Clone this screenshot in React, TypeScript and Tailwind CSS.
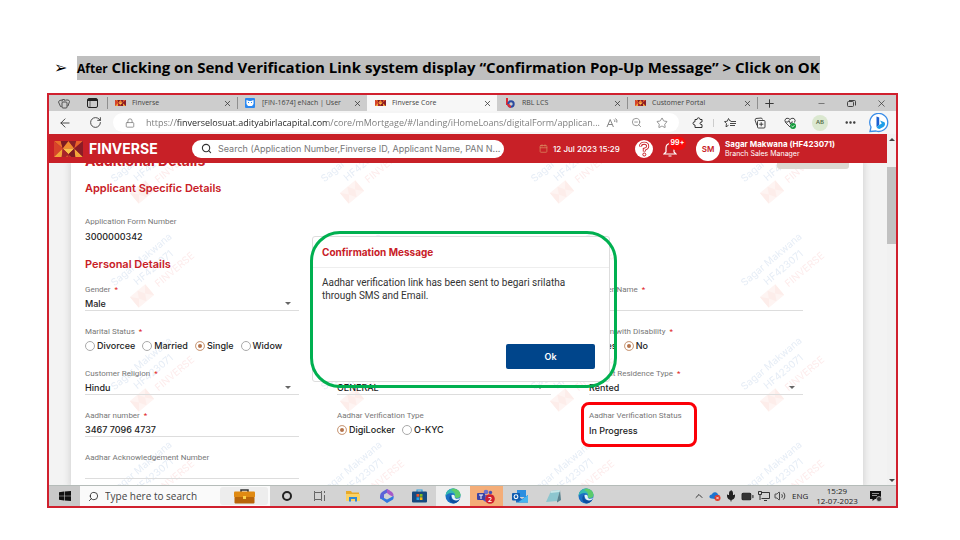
import { useId, type ReactNode } from "react";
import {
  ArrowLeft,
  BatteryMedium,
  Calendar,
  ChevronUp,
  Ellipsis,
  Lock,
  Mic,
  Minus,
  Plus,
  RotateCw,
  Search,
  Star,
  Volume2,
  X,
  ZoomOut,
} from "lucide-react";

const uiFont = "font-['Open_Sans','Noto_Sans',sans-serif]";
const formFont = "font-['Inter','Roboto',sans-serif]";

function SunLogo({ className }: { className: string }) {
  return (
    <svg viewBox="0 0 30 17" preserveAspectRatio="none" className={className} aria-hidden="true">
      <rect width="30" height="17" fill="#a8242a" />
      <path d="M0 0H7L9 8Z" fill="#e8702a" />
      <path d="M7 0H15L9 8Z" fill="#7d1a22" />
      <path d="M15 0L21 8L9 8Z" fill="#f08c2e" />
      <path d="M15 0H23L21 8Z" fill="#8c1f26" />
      <path d="M30 0H23L21 8Z" fill="#e8622a" />
      <path d="M0 0L9 8L0 17Z" fill="#d8432a" />
      <path d="M0 17L9 8L8 17Z" fill="#f2a53a" />
      <path d="M8 17L9 8L15 17Z" fill="#d9552b" />
      <path d="M9 8H21L15 14Z" fill="#fbc24a" />
      <path d="M15 17L21 8L22 17Z" fill="#c9352b" />
      <path d="M22 17L21 8L30 17Z" fill="#f2a53a" />
      <path d="M30 0L21 8L30 17Z" fill="#8a1c26" />
      <path d="M9 8L15 14L12 17L8 17Z" fill="#a8242a" />
      <path d="M21 8L15 14L18 17L22 17Z" fill="#7d1a22" />
    </svg>
  );
}

function Tab({ title, icon, active, fade }: { title: string; icon: ReactNode; active?: boolean; fade?: boolean }) {
  return (
    <div
      className={
        active
          ? "flex w-[130px] items-center bg-[#f7f7f7] pl-[7px]"
          : "flex w-[130px] items-center pl-[7px]"
      }
    >
      <span className="flex w-3 shrink-0 justify-center">{icon}</span>
      <span className={fade ? "ml-1.5 w-[84px] overflow-hidden whitespace-nowrap" : "ml-1.5 w-[84px] whitespace-nowrap"}>
        {title}
      </span>
      <button type="button" aria-label={"Close " + title} className="ml-[7px] text-[#333]">
        <X size={9} strokeWidth={2} />
      </button>
    </div>
  );
}

function Divider() {
  return <span className="-mr-px h-3 w-px self-center bg-[#8f8f8f]" />;
}

function TabStrip() {
  const sun = <SunLogo className="h-1.5 w-[11px]" />;
  return (
    <div className="flex h-4 items-stretch bg-[#cdcdcd] text-[7px] text-[#444]">
      <div className="flex w-[58px] items-center">
        <button type="button" aria-label="Workspaces" className="flex w-[30px] justify-center">
          <svg width="12" height="11" viewBox="0 0 12 11" fill="none" stroke="#444" strokeWidth="0.900">
            <rect x="4" y="4" width="5" height="6" rx="1" />
            <path d="M3.500 8.500H2.500L0.500 4L1.500 2.500L4 2M4 3.500L4.500 1.500H6.500L7 3M7.500 2H10.500L11.500 3.500L10 8H9.500" />
          </svg>
        </button>
        <button type="button" aria-label="Tab actions" className="flex w-[26px] justify-center">
          <svg width="11" height="10" viewBox="0 0 11 10" fill="none" stroke="#222">
            <rect x="0.500" y="0.500" width="10" height="9" rx="1.500" />
            <path d="M1 2H10" strokeWidth="2" />
            <path d="M3 3V9" strokeWidth="0.600" />
          </svg>
        </button>
      </div>
      <Divider />
      <Tab title="Finverse" icon={sun} />
      <Divider />
      <Tab
        title="[FIN-1674] eNach | User"
        fade
        icon={
          <svg width="10" height="10" viewBox="0 0 10 10">
            <rect width="10" height="10" rx="1" fill="#2b88f0" />
            <path d="M1.500 2L4 3H6L8.500 2V6L7 8H3L1.500 6Z" fill="#fff" />
            <path d="M3 4.500H4M6 4.500H7" stroke="#2b88f0" />
          </svg>
        }
      />
      <Tab title="Finverse Core" icon={sun} active />
      <Tab
        title="RBL LCS"
        icon={
          <svg width="9" height="10" viewBox="0 0 9 10" fill="none">
            <path d="M1 0V7" stroke="#e02a34" strokeWidth="2" />
            <circle cx="5" cy="6" r="2.700" stroke="#2a4aa0" strokeWidth="2" />
            <path d="M2.300 6A2.700 2.700 0 0 0 5 8.700" stroke="#e02a34" strokeWidth="2" />
          </svg>
        }
      />
      <Divider />
      <Tab title="Customer Portal" icon={sun} />
      <Divider />
      <button type="button" aria-label="New tab" className="flex w-6 items-center justify-center text-[#333]">
        <Plus size={13} strokeWidth={1.8} />
      </button>
      <div className="ml-auto flex items-center text-[#333]">
        <button type="button" aria-label="Minimise" className="flex w-[30px] justify-center">
          <Minus size={9} strokeWidth={1.5} />
        </button>
        <button type="button" aria-label="Restore" className="flex w-[30px] justify-center">
          <svg width="9" height="7" viewBox="0 0 9 7" fill="none" stroke="#333" strokeWidth="0.900">
            <rect x="0.500" y="1.500" width="6" height="5" rx="1" />
            <path d="M2 0.500H7.500Q8.500 0.500 8.500 1.500V5.500" />
          </svg>
        </button>
        <button type="button" aria-label="Close window" className="flex w-[30px] justify-center">
          <X size={11} strokeWidth={1.5} />
        </button>
      </div>
    </div>
  );
}

function ToolButton({ label, children }: { label: string; children: ReactNode }) {
  return (
    <button type="button" aria-label={label} className="flex w-[30px] shrink-0 items-center justify-center">
      {children}
    </button>
  );
}

function AddressRow() {
  return (
    <div className="flex h-[23px] items-center bg-[#f5f5f5] pr-px pl-px text-[#333]">
      <ToolButton label="Back">
        <ArrowLeft size={14} strokeWidth={1.5} />
      </ToolButton>
      <ToolButton label="Reload">
        <RotateCw size={13} strokeWidth={1.6} />
      </ToolButton>
      <div className="ml-[3px] flex h-[19px] min-w-0 flex-1 items-center rounded-full bg-white pl-3 text-[#777]">
        <Lock size={10} strokeWidth={1.8} className="shrink-0" />
        <input
          aria-label="Address"
          defaultValue="https://finverselosuat.adityabirlacapital.com/core/mMortgage/#/landing/iHomeLoans/digitalForm/applican..."
          className="ml-[11px] w-0 min-w-0 flex-1 bg-[linear-gradient(90deg,#777_30px,#222_30px,#222_181px,#777_181px)] bg-clip-text text-[9px] text-transparent outline-none"
        />
        <button type="button" aria-label="Read aloud" className="flex w-[23px] justify-center">
          <svg width="12" height="10" viewBox="0 0 12 10" fill="none" stroke="#777" strokeWidth="0.900">
            <path d="M1 9L4.200 1.500L7.400 9M2.200 6.500H6.200" />
            <path d="M8 1.500Q9.200 2.500 8.800 4M9.500 0.500Q11.500 2 10.800 4.500" />
          </svg>
        </button>
        <button type="button" aria-label="Zoom out" className="flex w-[26px] justify-center">
          <ZoomOut size={11} strokeWidth={1.6} />
        </button>
        <button type="button" aria-label="Favourite this page" className="mr-1 flex w-[26px] justify-center">
          <Star size={12} strokeWidth={1.6} />
        </button>
      </div>
      <div className="flex items-center pl-1">
        <ToolButton label="Extensions">
          <svg width="12" height="12" viewBox="0 0 12 12" fill="none" stroke="#333" strokeWidth="1">
            <path d="M3 2.500H5Q5 0.800 6.500 0.800Q8 0.800 8 2.500H10V5Q8 5 8 6.300Q8 7.700 10 7.700V10.500H3V8Q1 8 1 6.300Q1 4.700 3 4.700Z" />
          </svg>
        </ToolButton>
        <span className="mr-px h-2 w-px bg-[#ccc]" />
        <ToolButton label="Favourites">
          <svg width="12" height="10" viewBox="0 0 12 10" fill="none" stroke="#333" strokeWidth="0.900">
            <path d="M7 3L6 3L4.500 0.500L3.300 3.200L0.500 3.600L2.500 5.600L2 8.800L4.500 7.300" />
            <path d="M7 3.500H12M6 5.500H12M6 7.500H11" />
          </svg>
        </ToolButton>
        <ToolButton label="Collections">
          <svg width="12" height="12" viewBox="0 0 12 12" fill="none" stroke="#333" strokeWidth="0.900">
            <rect x="3.500" y="3.500" width="7.500" height="7.500" rx="1" />
            <path d="M3 8.500L1 3L1.800 1.500L7.500 1L8.500 2.500M7.200 5.200V9.300M5.200 7.200H9.300" />
          </svg>
        </ToolButton>
        <ToolButton label="Browser essentials">
          <svg width="12" height="12" viewBox="0 0 12 12" fill="none" stroke="#333" strokeWidth="0.900">
            <path d="M6 10L1.500 5.500Q0 3 2 1.500Q4.200 0.500 6 2.500Q7.800 0.500 10 1.500Q12 3 10.500 5.500M1.500 5H4L5 3.500L6.500 7L7.500 5H9" />
            <circle cx="9" cy="9" r="3" fill="#159a3c" stroke="none" />
            <path d="M7.500 9L8.600 10L10.400 8.200" stroke="#fff" />
          </svg>
        </ToolButton>
        <ToolButton label="Profile">
          <span className="flex size-4 items-center justify-center rounded-full bg-[#dbe8d0] text-[6px] font-semibold text-[#4d6640]">AB</span>
        </ToolButton>
        <ToolButton label="Settings and more">
          <Ellipsis size={13} strokeWidth={2.5} />
        </ToolButton>
        <ToolButton label="Bing chat">
          <svg width="22" height="20" viewBox="0 0 22 20">
            <path d="M1 18.500L2 14A9 9 0 1 1 7 18L1 18.500Z" fill="#fff" stroke="#3a8de8" strokeWidth="1.300" />
            <path d="M7.500 3.500L10.200 4.500V12L7.500 14Z" fill="#1b5fd0" />
            <path d="M7.500 14L10.200 12L12.800 10.500L11 7.500L15.500 9.300Q17 12 14.300 14L10.500 16Q8.500 16 7.500 14Z" fill="#1f9fe8" />
          </svg>
        </ToolButton>
      </div>
    </div>
  );
}

function AppHeader() {
  return (
    <header className="relative z-10 flex h-[29px] shrink-0 items-center bg-[#c82027] pl-[5px] text-white">
      <SunLogo className="h-4 w-[29px] shrink-0" />
      <span className="ml-1.5 w-[103px] shrink-0 text-[14px] font-bold">FINVERSE</span>
      <label className="flex h-[18px] w-[312px] items-center rounded-full bg-white pl-[9px] text-[#333]">
        <Search size={11} strokeWidth={2.4} className="shrink-0" />
        <input
          type="text"
          aria-label="Search"
          placeholder="Search (Application Number,Finverse ID, Applicant Name, PAN N..."
          className="ml-1.5 w-0 min-w-0 flex-1 text-[9px] outline-none placeholder:text-[#777]"
        />
      </label>
      <Calendar size={9} strokeWidth={2} className="ml-[35px] shrink-0 text-[#d9895f]" />
      <time className="ml-[5px] w-[82px] shrink-0 text-[8px] font-medium whitespace-nowrap">12 Jul 2023 15:29</time>
      <button type="button" aria-label="Help" className="shrink-0">
        <svg width="18" height="18" viewBox="0 0 18 18" fill="none">
          <circle cx="9" cy="9" r="9" fill="#fff" />
          <path d="M5.500 6.500Q5.500 3.200 9.200 3.200Q12.700 3.200 12.700 6.300Q12.700 8.500 9.300 9.300V11.500" stroke="#c82027" strokeWidth="3" />
          <path d="M5.500 6Q5.500 3.200 9.200 3.200Q12.700 3.200 12.700 6.300Q12.700 8.500 9.300 9.300V11" stroke="#fff" strokeWidth="1.200" />
          <circle cx="9.300" cy="14.500" r="1.500" stroke="#c82027" />
        </svg>
      </button>
      <button type="button" aria-label="Notifications" className="relative ml-2.5 shrink-0">
        <svg width="14" height="16" viewBox="0 0 14 16" fill="none" stroke="#fff" strokeWidth="1.200">
          <path d="M1 13L3 11V7Q3 3 7 2.500Q11 3 11 7V11L13 13ZM5.500 15H8.500M7 2.500V1" />
        </svg>
        <span className="absolute -top-[4px] left-1.5 flex h-[13px] w-[17px] items-center justify-center rounded-full bg-[#f80c0c] text-[7px] font-bold">99+</span>
      </button>
      <span className="ml-[19px] flex size-6 shrink-0 items-center justify-center rounded-full bg-white text-[8px] font-semibold text-[#c82027]">SM</span>
      <div className="ml-[5px] whitespace-nowrap">
        <p className="text-[8px] leading-[10px] font-bold">Sagar Makwana (HF423071)</p>
        <p className="text-[7px] leading-[9px]">Branch Sales Manager</p>
      </div>
    </header>
  );
}

function Watermark() {
  const id = useId();
  return (
    <svg className="pointer-events-none absolute inset-0 size-full" aria-hidden="true">
      <defs>
        <pattern id={id} width="210" height="104" patternUnits="userSpaceOnUse" x="34" y="62">
          <g transform="translate(36 34) rotate(-40)" fontSize="10" textAnchor="middle">
            <text x="0" y="4" fill="#e6edf6">Sagar Makwana</text>
            <text x="4" y="18" fill="#e6edf6">HF423071</text>
            <text x="19" y="33" fill="#fdecec">FINVERSE</text>
            <path d="M-33 22H-13V36H-33Z" fill="#fef4f2" />
            <path d="M-33 22L-27 29L-33 36M-13 22L-19 29L-13 36M-27 29L-23 22L-19 29L-23 36Z" fill="#fdedea" />
          </g>
        </pattern>
      </defs>
      <rect width="100%" height="100%" fill={`url(#${id})`} />
    </svg>
  );
}

const labelClass =
  "block h-[13px] font-['Roboto',sans-serif] text-[8px] leading-[13px] whitespace-nowrap text-[#777]";

function RequiredMark() {
  return <span className="ml-1 text-[#e02020]">*</span>;
}

function FieldLabel({ text, required, htmlFor }: { text: string; required?: boolean; htmlFor?: string }) {
  return (
    <label htmlFor={htmlFor} className={labelClass}>
      {text}
      {required && <RequiredMark />}
    </label>
  );
}

function TextField({ label, value, required, plain }: { label: string; value: string; required?: boolean; plain?: boolean }) {
  const id = useId();
  return (
    <div>
      <FieldLabel text={label} required={required} htmlFor={id} />
      <input
        id={id}
        defaultValue={value}
        className={
          plain
            ? "block h-[15px] w-full pt-px text-[9px] font-medium text-[#222] outline-none"
            : "block h-[15px] w-full border-b border-[#ddd] pt-px text-[9px] font-medium text-[#222] outline-none"
        }
      />
    </div>
  );
}

function SelectField({ label, value, required }: { label: string; value: string; required?: boolean }) {
  const id = useId();
  return (
    <div>
      <FieldLabel text={label} required={required} htmlFor={id} />
      <div className="flex h-[15px] items-center border-b border-[#ddd] pt-px">
        <select id={id} className="h-full w-0 flex-1 appearance-none text-[9px] font-medium text-[#222] outline-none">
          <option>{value}</option>
        </select>
        <span className="pointer-events-none mr-2 h-0 border-x-[3px] border-t-[3px] border-x-transparent border-t-[#666]" />
      </div>
    </div>
  );
}

function RadioField({ label, options, selected, required }: { label: string; options: string[]; selected: string; required?: boolean }) {
  const name = useId();
  return (
    <fieldset>
      <legend className={labelClass}>
        {label}
        {required && <RequiredMark />}
      </legend>
      <div className="flex h-4 items-center gap-[7px] text-[9px] font-medium text-[#222]">
        {options.map((option) => (
          <label key={option} className="flex items-center gap-0.5">
            <input
              type="radio"
              name={name}
              defaultChecked={option === selected}
              className="size-2.5 appearance-none rounded-full border border-[#aaa] bg-white checked:border-[#d0a688] checked:bg-[#b5734b] checked:shadow-[inset_0_0_0_2px_#fff]"
            />
            {option}
          </label>
        ))}
      </div>
    </fieldset>
  );
}

function DetailsForm() {
  const sectionTitle = "text-[11px] leading-4 font-semibold text-[#c82027]";
  return (
    <form className="relative -mt-[11px] pl-3.5">
      <div className="flex h-[17px] items-end justify-between pr-3.5">
        <h1 className="text-[14px] leading-[17px] font-bold text-[#c82027]">Additional Details</h1>
        <button type="button" aria-label="Section options" className="h-[17px] w-[72px] rounded-[3px] bg-[#dcd9d2]" />
      </div>
      <div className="pr-[60px]">
        <h2 className={`mt-[11px] ${sectionTitle}`}>Applicant Specific Details</h2>
        <div className="mt-[19px]">
          <TextField label="Application Form Number" value="3000000342" plain />
        </div>
        <h2 className={`mt-[13px] ${sectionTitle}`}>Personal Details</h2>
        <div className="mt-[11px] grid auto-rows-[42px] grid-cols-3 gap-x-[38px]">
          <SelectField label="Gender" value="Male" required />
          <div className="col-start-3">
            <TextField label="Mother Name" value="" required />
          </div>
          <RadioField label="Marital Status" options={["Divorcee", "Married", "Single", "Widow"]} selected="Single" required />
          <div className="col-start-3">
            <RadioField label="Person with Disability" options={["Yes", "No"]} selected="No" required />
          </div>
          <SelectField label="Customer Religion" value="Hindu" required />
          <SelectField label="Category" value="GENERAL" required />
          <SelectField label="Current Residence Type" value="Rented" required />
          <TextField label="Aadhar number" value="3467 7096 4737" required />
          <RadioField label="Aadhar Verification Type" options={["DigiLocker", "O-KYC"]} selected="DigiLocker" />
          <div className="relative">
            <TextField label="Aadhar Verification Status" value="In Progress" plain />
            <span className="pointer-events-none absolute -top-[7px] -left-2 h-[45px] w-[116px] rounded-lg border-3 border-[#fb0007]" />
          </div>
          <TextField label="Aadhar Acknowledgement Number" value="" />
        </div>
      </div>
    </form>
  );
}

function ConfirmationDialog() {
  return (
    <div className="absolute inset-0 flex items-start justify-center pt-[73px] pr-[14px]">
      <div role="dialog" aria-labelledby="confirm-title" className="relative h-[146px] w-[298px] rounded-[3px] border border-[#ddd] bg-white">
        <h2 id="confirm-title" className="flex h-[31px] items-center border-b border-[#eee] pl-[9px] text-[10px] font-bold text-[#c82027]">
          Confirmation Message
        </h2>
        <p className="mt-2 pr-10 pl-[9px] font-['Roboto',sans-serif] text-[10px] leading-[13px] text-[#333]">
          Aadhar verification link has been sent to begari srilatha through SMS and Email.
        </p>
        <button type="button" className="mt-[42px] mr-3.5 ml-auto block h-[25px] w-[89px] rounded-[2px] bg-[#00458b] text-[9px] font-semibold text-white">
          Ok
        </button>
        <span className="pointer-events-none absolute -top-[6px] -right-2 -bottom-[7px] -left-[3px] rounded-[30px] border-3 border-[#00b050]" />
      </div>
    </div>
  );
}

function EdgeIcon() {
  return (
    <svg width="16" height="16" viewBox="0 0 16 16">
      <circle cx="8" cy="8" r="7.500" fill="#1b6fc4" />
      <path d="M0.600 7Q1.500 1 8 0.500Q14.500 0.800 15.500 6.500Q15.500 10 11.500 10Q9 10 9.800 8.200Q10 5 6.500 5Q2.500 5 0.600 8Z" fill="#35b9b0" />
      <path d="M8 0.500Q14.500 0.800 15.500 6.500Q15.500 10 11.500 10Q9.500 9.500 10 8Q11 4 6 2Z" fill="#5ccb6b" />
      <path d="M6 7Q5 12 11 12.500Q13 12.500 14.500 11.500Q12 15.500 8 15.500Q3.500 13.500 4.500 9Q5 7.500 6 7Z" fill="#0d4fa0" />
      <path d="M6.500 7Q9.800 6 9.800 8.500Q9.200 10 11 10.800Q14 11 15 9.500Q14.500 12.500 11 12.500Q6.500 12 6.500 7Z" fill="#e8f3f8" />
    </svg>
  );
}

function TaskButton({ label, tone, children }: { label: string; tone?: "light" | "alert"; children: ReactNode }) {
  const base = "flex h-full flex-1 items-center justify-center";
  return (
    <button
      type="button"
      aria-label={label}
      className={tone === "light" ? `${base} bg-[#eeeeee]` : tone === "alert" ? `${base} bg-[#f4ad78]` : base}
    >
      {children}
    </button>
  );
}

function Taskbar() {
  return (
    <footer className="flex h-[21px] items-center border-t border-[#b5bcb9] bg-[#d3d3d3] text-[#222]">
      <button type="button" aria-label="Start" className="flex h-full w-[31px] items-center justify-center bg-[#c9c9c9]">
        <svg width="12" height="10" viewBox="0 0 12 10" fill="#111">
          <path d="M0 1.300L5 0.600V4.700H0ZM5.600 0.500L12 0V4.700H5.600ZM0 5.300H5V9.400L0 8.700ZM5.600 5.300H12V10L5.600 9.500Z" />
        </svg>
      </button>
      <label className="flex h-full w-[190px] items-center bg-[#fafafa] pl-2">
        <Search size={11} strokeWidth={1.8} className="shrink-0 -scale-x-100" />
        <input
          aria-label="Type here to search"
          placeholder="Type here to search"
          className="ml-1.5 w-0 min-w-0 flex-1 text-[10px] outline-none placeholder:text-[#444]"
        />
        <span className="flex h-[18px] w-12 items-center justify-center rounded-[3px] bg-[#ededed]">
          <svg width="21" height="15" viewBox="0 0 21 15">
            <path d="M7 3V1H14V3" fill="none" stroke="#333" strokeWidth="1.500" />
            <rect y="2.500" width="21" height="6" rx="1" fill="#e08a12" />
            <rect x="0.500" y="8" width="20" height="6.500" rx="1" fill="#b8650a" />
            <rect x="9" y="7" width="3" height="3" fill="#fbd24a" />
          </svg>
        </span>
        <span className="w-0.5" />
      </label>
      <div className="flex h-full w-[333px] items-center">
        <TaskButton label="Cortana">
          <span className="size-2.5 rounded-full border-2 border-[#222]" />
        </TaskButton>
        <TaskButton label="Task view">
          <svg width="12" height="10" viewBox="0 0 12 10" fill="none" stroke="#666">
            <path d="M0.500 0V1.500H7.500V0M0.500 10V8.500H7.500V10M0.500 1.500V8.500M7.500 1.500V8.500M10.500 0V2M10.500 4V10" />
          </svg>
        </TaskButton>
        <TaskButton label="File Explorer">
          <svg width="14" height="12" viewBox="0 0 14 12">
            <path d="M0 1H5L6 2.500H13V11H0Z" fill="#e8a92a" />
            <path d="M0 4H14V11H0Z" fill="#fbd264" />
            <path d="M3 7H11V11.500H9V9H5V11.500H3Z" fill="#2f88d8" />
          </svg>
        </TaskButton>
        <TaskButton label="Microsoft 365">
          <svg width="14" height="14" viewBox="0 0 14 14">
            <path d="M7 0L2 3Q0 4.500 0 7V9.500L4 11V5.500L10 2Z" fill="#5a62d8" />
            <path d="M7 0L12 3Q14 4.500 13.500 8L9.500 6L7 4Z" fill="#a65ac8" />
            <path d="M0 9L7 14L13 10.500Q14 9 13.500 7L7 10.500L4 9Z" fill="#3179e0" />
          </svg>
        </TaskButton>
        <TaskButton label="Microsoft Store">
          <svg width="15" height="14" viewBox="0 0 15 14">
            <path d="M5 3V1H10V3" fill="none" stroke="#2ba0e0" strokeWidth="1.200" />
            <rect y="2.500" width="15" height="11" rx="1" fill="#164a80" />
            <path d="M4.500 5H7.200V7.700H4.500Z" fill="#f2542a" />
            <path d="M7.800 5H10.500V7.700H7.800Z" fill="#80bb20" />
            <path d="M4.500 8.300H7.200V11H4.500Z" fill="#20a4ee" />
            <path d="M7.800 8.300H10.500V11H7.800Z" fill="#fdb813" />
          </svg>
        </TaskButton>
        <TaskButton label="Microsoft Edge" tone="light">
          <EdgeIcon />
        </TaskButton>
        <TaskButton label="Microsoft Teams" tone="alert">
          <svg width="18" height="15" viewBox="0 0 18 15">
            <circle cx="9" cy="3" r="2.300" fill="#6b70d0" />
            <circle cx="13.500" cy="3.500" r="1.700" fill="#4a50b0" />
            <path d="M5 6H16V10Q15 13 11 13Q6 13 5 9Z" fill="#5a60c4" />
            <rect y="4" width="8" height="7" rx="1" fill="#3c43a5" />
            <path d="M2 6H6M4 6V10" stroke="#fff" />
            <circle cx="13" cy="10" r="4.800" fill="#d0202e" />
            <text x="13" y="12.600" textAnchor="middle" fontSize="7" fontWeight="600" fill="#fff">2</text>
          </svg>
        </TaskButton>
        <TaskButton label="Outlook">
          <svg width="16" height="13" viewBox="0 0 16 13">
            <path d="M5 0H14V7H5Z" fill="#2b8ee0" />
            <path d="M4 5L10 9L16 5V12.500H4Z" fill="#1c6fc4" />
            <path d="M16 5L6 12.500H16Z" fill="#46b4f0" />
            <rect y="3" width="8" height="7.500" rx="1" fill="#0f5db0" />
            <circle cx="4" cy="6.700" r="1.900" fill="none" stroke="#fff" strokeWidth="1.100" />
          </svg>
        </TaskButton>
        <TaskButton label="Notepad">
          <svg width="15" height="13" viewBox="0 0 15 13">
            <path d="M5 1L14 0L11 11L0 12Z" fill="#8cc6cf" />
            <path d="M14 0L15 10L11 12.500V11Z" fill="#5a8490" />
            <path d="M5 1L14 0L13.500 2L4.500 3Z" fill="#c8e6e8" />
          </svg>
        </TaskButton>
        <TaskButton label="Microsoft Edge, second window">
          <EdgeIcon />
        </TaskButton>
      </div>
      <div className="ml-auto flex items-center pr-3.5">
        <div className="flex items-center gap-1">
          <ChevronUp size={12} strokeWidth={1.8} />
          <svg width="12" height="10" viewBox="0 0 12 10">
            <path d="M2.500 7.500Q0 7 0.500 5Q1 3.500 2.700 3.500Q4 0.800 6.500 1.200Q8.500 1.700 9 3.500Q11 4 11 6L6 8Z" fill="#1c74d0" />
            <circle cx="8.500" cy="7" r="3" fill="#e03a2a" />
            <path d="M7.300 5.800L9.700 8.200M9.700 5.800L7.300 8.200" stroke="#fff" strokeWidth="0.800" />
          </svg>
          <Mic size={12} strokeWidth={2} fill="#222" />
          <BatteryMedium size={13} strokeWidth={2} fill="#333" />
          <svg width="12" height="10" viewBox="0 0 12 10" fill="none" stroke="#222" strokeWidth="0.900">
            <path d="M3.500 1.500H11.500V7.500H3.500M6 9.500H9M0.500 0.500H3.500V3.500H0.500ZM2 3.500V9" />
          </svg>
          <Volume2 size={12} strokeWidth={1.6} />
        </div>
        <span className="ml-1.5 w-4 text-[8px]">ENG</span>
        <time className="w-[58px] text-center text-[8px] leading-[10px]">
          15:29
          <br />
          12-07-2023
        </time>
        <button type="button" aria-label="Notification centre" className="ml-1">
          <svg width="12" height="11" viewBox="0 0 12 11">
            <path d="M0 0H11V8H5L2.500 10V8H0Z" fill="#111" />
            <path d="M2 2.500H9M2 4.500H7" stroke="#ccc" strokeWidth="0.700" />
            <circle cx="9" cy="8" r="2.500" fill="#333" stroke="#ccc" strokeWidth="0.700" />
          </svg>
        </button>
      </div>
    </footer>
  );
}

export default function App() {
  return (
    <div className="bg-white pt-[57px] pb-8">
      <div className="flex h-[22px] items-center pl-[54px] font-['Lato',sans-serif] whitespace-nowrap text-black">
        <span className="w-[23px] font-['DejaVu_Sans',sans-serif] text-[16px]">➢</span>
        <h1 className="bg-[#bfbfbf] font-['Open_Sans',sans-serif] text-[15px] leading-[22px] font-bold">
          <span className="text-[12px]">After</span> Clicking on Send Verification Link system display “Confirmation Pop-Up Message” &gt; Click on OK
        </h1>
      </div>
      <div className={`mt-3.5 mr-[62px] ml-[47px] border-2 border-[#d0202e] ${uiFont}`}>
        <TabStrip />
        <AddressRow />
        <div className={`flex h-[351px] ${formFont}`}>
          <div className="flex min-w-0 flex-1 flex-col">
            <AppHeader />
            <main className="relative flex-1 overflow-hidden bg-[#f3f3f3] pr-6 pl-[22px]">
              <div className="relative flow-root h-full bg-white shadow-[0_0_6px_2px_#d8d8d8]">
                <Watermark />
                <DetailsForm />
              </div>
              <ConfirmationDialog />
            </main>
          </div>
          <div className="flex w-[9px] flex-col items-center justify-between bg-[#f1f1f1]">
            <div className="flex w-full flex-col items-center">
              <span className="mt-1 border-x-[3px] border-b-[3px] border-x-transparent border-b-[#444]" />
              <span className="mt-[26px] h-[77px] w-full bg-[#c1c1c1]" />
            </div>
            <span className="mb-[3px] border-x-[3px] border-t-[3px] border-x-transparent border-t-[#444]" />
          </div>
        </div>
        <Taskbar />
      </div>
    </div>
  );
}
